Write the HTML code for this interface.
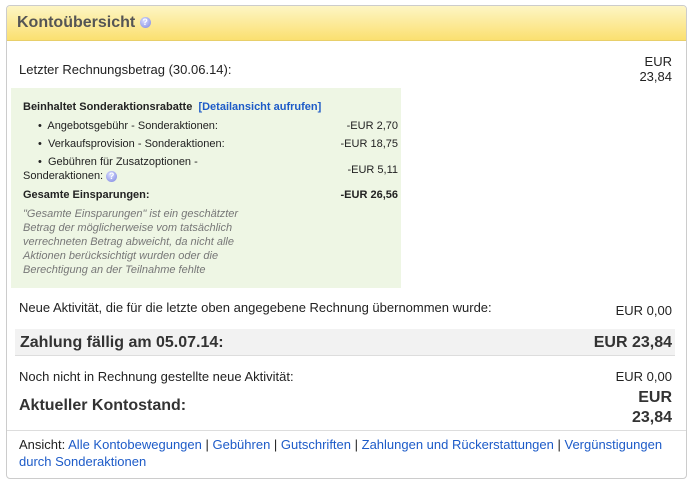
<!DOCTYPE html>
<html><head><meta charset="utf-8"><style>
body{margin:0;width:693px;height:484px;background:#fff;font-family:"Liberation Sans",Arial,sans-serif;color:#222;position:relative;overflow:hidden}
.a{position:absolute;white-space:nowrap}
.box{position:absolute;left:6px;top:5px;width:679px;height:472px;border:1px solid #ccc;border-radius:4px;overflow:hidden}
.hd{position:absolute;left:0;top:0;right:0;height:34px;background:linear-gradient(#fdf5c4,#fbe070);border-bottom:1px solid #e8cf6a}
.q{display:inline-block;width:11px;height:11px;border-radius:50%;background:radial-gradient(circle at 40% 35%,#d8dcff,#7b84e0);color:#fff;font-size:9px;line-height:11px;text-align:center;font-weight:bold;vertical-align:middle}
.r{text-align:right}
.s11{font-size:11px}
.lk{color:#1d5bc8}
</style></head><body>
<div class="box"><div class="hd"></div></div>
<div class="a" style="left:17px;top:14px;font-size:16px;font-weight:bold;color:#555">Kontoübersicht <span class="q">?</span></div>
<div class="a" style="left:19px;top:62px;font-size:13px">Letzter Rechnungsbetrag (30.06.14):</div>
<div class="a r" style="right:21px;top:54px;font-size:13px;line-height:15px">EUR<br>23,84</div>
<div class="a" style="left:11px;top:88px;width:390px;height:200px;background:#eef6e4"></div>
<div class="a s11" style="left:23px;top:101px;font-weight:bold">Beinhaltet Sonderaktionsrabatte &nbsp;<span class="lk">[Detailansicht aufrufen]</span></div>
<div class="a s11" style="left:38px;top:120px">•&nbsp; Angebotsgebühr - Sonderaktionen:</div>
<div class="a s11 r" style="right:295px;top:120px">-EUR 2,70</div>
<div class="a s11" style="left:38px;top:138px">•&nbsp; Verkaufsprovision - Sonderaktionen:</div>
<div class="a s11 r" style="right:295px;top:138px">-EUR 18,75</div>
<div class="a s11" style="left:38px;top:156px">•&nbsp; Gebühren für Zusatzoptionen -</div>
<div class="a s11" style="left:23px;top:170px">Sonderaktionen: <span class="q">?</span></div>
<div class="a s11 r" style="right:295px;top:164px">-EUR 5,11</div>
<div class="a s11" style="left:23px;top:189px;font-weight:bold">Gesamte Einsparungen:</div>
<div class="a s11 r" style="right:295px;top:189px;font-weight:bold">-EUR 26,56</div>
<div class="a s11" style="left:23px;top:207px;font-style:italic;color:#777;line-height:14px">"Gesamte Einsparungen" ist ein geschätzter<br>Betrag der möglicherweise vom tatsächlich<br>verrechneten Betrag abweicht, da nicht alle<br>Aktionen berücksichtigt wurden oder die<br>Berechtigung an der Teilnahme fehlte</div>
<div class="a" style="left:19px;top:300px;font-size:13px">Neue Aktivität, die für die letzte oben angegebene Rechnung übernommen wurde:</div>
<div class="a r" style="right:21px;top:303px;font-size:13px">EUR 0,00</div>
<div class="a" style="left:15px;top:329px;width:660px;height:26px;background:#f2f2f2;border-bottom:1px solid #ddd"></div>
<div class="a" style="left:20px;top:334px;font-size:16px;font-weight:bold;color:#333">Zahlung fällig am 05.07.14:</div>
<div class="a r" style="right:21px;top:334px;font-size:16px;font-weight:bold;color:#333">EUR 23,84</div>
<div class="a" style="left:19px;top:369px;font-size:13px">Noch nicht in Rechnung gestellte neue Aktivität:</div>
<div class="a r" style="right:21px;top:369px;font-size:13px">EUR 0,00</div>
<div class="a" style="left:19px;top:397px;font-size:16px;font-weight:bold;color:#333">Aktueller Kontostand:</div>
<div class="a r" style="right:21px;top:388px;font-size:16px;font-weight:bold;color:#333;line-height:20px">EUR<br>23,84</div>
<div class="a" style="left:7px;top:430px;width:679px;height:1px;background:#ddd"></div>
<div class="a" style="left:19px;top:436px;font-size:13px;line-height:17px;white-space:normal;width:660px">Ansicht: <span class="lk">Alle Kontobewegungen</span> | <span class="lk">Gebühren</span> | <span class="lk">Gutschriften</span> | <span class="lk">Zahlungen und Rückerstattungen</span> | <span class="lk">Vergünstigungen durch Sonderaktionen</span></div>
</body></html>
